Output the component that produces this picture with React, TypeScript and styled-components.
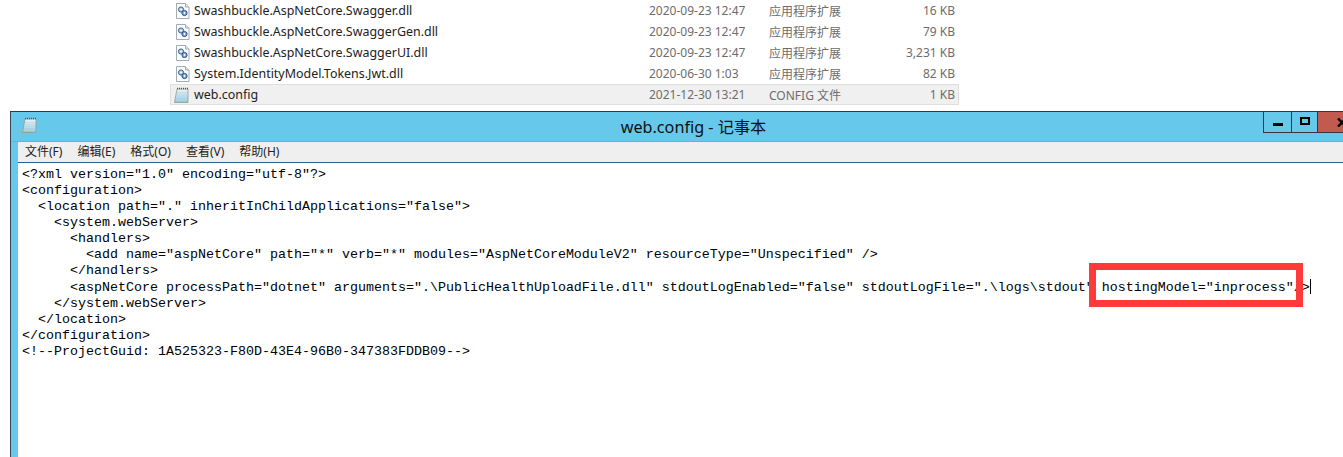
import React from "react";
import styled, { createGlobalStyle } from "styled-components";

const Global = createGlobalStyle`
  html, body { margin: 0; padding: 0; background: #fff; overflow: hidden; }
  #root { width: 1343px; height: 457px; overflow: hidden; }
`;

const Page = styled.div`
  display: flex;
  flex-direction: column;
  width: 1343px;
  height: 457px;
  overflow: hidden;
`;

const FileList = styled.div`
  height: 111px;
  flex: none;
  padding-left: 170px;
  box-sizing: border-box;
`;

const FileRow = styled.div<{ $selected?: boolean }>`
  display: grid;
  grid-template-columns: 24px 455px 120px 132px 54px;
  align-items: center;
  width: 789px;
  height: 21px;
  box-sizing: border-box;
  background: ${(p) => (p.$selected ? "#f0f0f0" : "transparent")};
  outline: ${(p) => (p.$selected ? "1px solid #dedede" : "none")};
  outline-offset: -1px;
  font: 12px "Noto Sans", "Noto Sans CJK SC", sans-serif;
`;

const IconCell = styled.div<{ $inset: number }>`
  display: flex;
  padding-left: ${(p) => p.$inset}px;
`;

const FileName = styled.span`
  color: #222;
  font-size: 12.45px;
  white-space: nowrap;
`;

const FileMeta = styled.span`
  color: #6d6d6d;
  white-space: nowrap;
`;

const FileSize = styled(FileMeta)`
  text-align: right;
`;

const Notepad = styled.section`
  position: relative;
  flex: 1;
  margin-left: 10px;
  width: 1345px;
  box-sizing: border-box;
  display: flex;
  flex-direction: column;
  background: #66c9eb;
  border-top: 1px solid #33373a;
  border-left: 1px solid #33494f;
  padding-left: 7px;
`;

const TitleBar = styled.header`
  height: 30px;
  flex: none;
  position: relative;
  display: flex;
  align-items: center;
  justify-content: center;
  padding: 0 0 1px 21px;
  box-sizing: border-box;
  border-bottom: 1px solid #5fb4d2;
  margin-left: -7px;
  font: 16.2px "Noto Sans", "Noto Sans CJK SC", sans-serif;
  color: #111;
`;

const AppIcon = styled.div`
  position: absolute;
  left: 11px;
  top: 5px;
  display: flex;
`;

const WindowButtons = styled.div`
  position: absolute;
  right: 0;
  top: 0;
  display: flex;
  height: 21px;
  box-sizing: border-box;
  border-bottom: 1px solid #33373a;
  border-left: 1px solid #33373a;
`;

const WinButton = styled.div<{ $close?: boolean; $w: number }>`
  width: ${(p) => p.$w}px;
  display: flex;
  align-items: center;
  justify-content: ${(p) => (p.$close ? "flex-start" : "center")};
  padding-left: ${(p) => (p.$close ? "19px" : "0")};
  box-sizing: border-box;
  background: ${(p) => (p.$close ? "#c15b4f" : "transparent")};
  border-right: ${(p) => (p.$close ? "none" : "1px solid #33373a")};
`;

const MinGlyph = styled.div`
  width: 10px;
  height: 3px;
  background: #000;
  margin-top: 5px;
`;

const MaxGlyph = styled.div`
  width: 10px;
  height: 8px;
  box-sizing: border-box;
  border: 2px solid #000;
  margin-top: -3px;
`;

const MenuBar = styled.nav`
  height: 21px;
  flex: none;
  display: flex;
  align-items: center;
  gap: 15px;
  padding: 0 0 2px 7px;
  background: #efefef;
  border-bottom: 1px solid #2f5f8a;
  box-sizing: border-box;
  font: 12px "Noto Sans", "Noto Sans CJK SC", sans-serif;
  color: #222;
`;

const MenuItem = styled.span`
  white-space: nowrap;
`;

const Editor = styled.pre`
  flex: 1;
  margin: 0;
  padding: 4px 0 0 4px;
  background: #fff;
  font: 13.33px/16px "Liberation Mono", "Noto Sans CJK SC", monospace;
  color: #000;
  white-space: pre;
  overflow: hidden;
`;

const Caret = styled.span`
  display: inline-block;
  width: 1px;
  height: 15px;
  background: #000;
  vertical-align: -3px;
`;

const Highlight = styled.div`
  position: absolute;
  left: 1078px;
  top: 151px;
  width: 214px;
  height: 44px;
  box-sizing: border-box;
  border: 7px solid #ff3a3a;
  pointer-events: none;
`;

const DllIcon = () => (
  <svg width="14" height="16" viewBox="0 0 14 16">
    <path d="M.5.5h9l3.5 3.5v11.5h-12.5z" fill="#fcfdfe" stroke="#a3abb3" />
    <path d="M9.5.5v3.5h3.5" fill="#dfe6ec" stroke="#a3abb3" />
    <circle cx="5" cy="6.5" r="2.6" fill="#a9c6e4" stroke="#41648f" />
    <circle cx="8.5" cy="10" r="2.6" fill="#7fa7d1" stroke="#2f5486" />
    <circle cx="5" cy="6.5" r=".9" fill="#fff" />
    <circle cx="8.5" cy="10" r=".9" fill="#fff" />
  </svg>
);

const NotepadIcon = () => (
  <svg width="15" height="16" viewBox="0 0 15 16">
    <defs>
      <linearGradient id="pad" x1="0" y1="0" x2="0" y2="1">
        <stop offset="0" stopColor="#e9f5f8" />
        <stop offset="1" stopColor="#8fc6dc" />
      </linearGradient>
    </defs>
    <path d="M3 2h11v13.5h-13.5z" fill="url(#pad)" stroke="#9b9a86" strokeWidth=".8" />
    <path d="M3 5.5h10M2.6 8h10.4M2.2 10.5h10.8M1.8 13h11.2" stroke="#bcdce8" strokeWidth=".8" />
    <path d="M3 1.5h11" stroke="#555" strokeWidth="1.6" strokeDasharray="1 1" />
  </svg>
);

const CloseGlyph = () => (
  <svg width="11" height="9" viewBox="0 0 11 9">
    <path d="M1 .5l8 8M9 .5l-8 8" stroke="#000" strokeWidth="2.4" fill="none" />
  </svg>
);

const files = [
  ["Swashbuckle.AspNetCore.Swagger.dll", "2020-09-23 12:47", "应用程序扩展", "16 KB"],
  ["Swashbuckle.AspNetCore.SwaggerGen.dll", "2020-09-23 12:47", "应用程序扩展", "79 KB"],
  ["Swashbuckle.AspNetCore.SwaggerUI.dll", "2020-09-23 12:47", "应用程序扩展", "3,231 KB"],
  ["System.IdentityModel.Tokens.Jwt.dll", "2020-06-30 1:03", "应用程序扩展", "82 KB"],
];

const menus = ["文件(F)", "编辑(E)", "格式(O)", "查看(V)", "帮助(H)"];

const xml = `<?xml version="1.0" encoding="utf-8"?>
<configuration>
  <location path="." inheritInChildApplications="false">
    <system.webServer>
      <handlers>
        <add name="aspNetCore" path="*" verb="*" modules="AspNetCoreModuleV2" resourceType="Unspecified" />
      </handlers>
      <aspNetCore processPath="dotnet" arguments=".\\PublicHealthUploadFile.dll" stdoutLogEnabled="false" stdoutLogFile=".\\logs\\stdout" hostingModel="inprocess"/>`;

const xmlEnd = `
    </system.webServer>
  </location>
</configuration>
<!--ProjectGuid: 1A525323-F80D-43E4-96B0-347383FDDB09-->`;

export default function App() {
  return (
    <Page>
      <Global />
      <FileList>
        {files.map((f) => (
          <FileRow key={f[0]}>
            <IconCell $inset={6}><DllIcon /></IconCell>
            <FileName>{f[0]}</FileName>
            <FileMeta>{f[1]}</FileMeta>
            <FileMeta>{f[2]}</FileMeta>
            <FileSize>{f[3]}</FileSize>
          </FileRow>
        ))}
        <FileRow $selected>
          <IconCell $inset={4}><NotepadIcon /></IconCell>
          <FileName>web.config</FileName>
          <FileMeta>2021-12-30 13:21</FileMeta>
          <FileMeta>CONFIG 文件</FileMeta>
          <FileSize>1 KB</FileSize>
        </FileRow>
      </FileList>
      <Notepad>
        <TitleBar>
          <AppIcon><NotepadIcon /></AppIcon>
          web.config - 记事本
          <WindowButtons>
            <WinButton $w={28}><MinGlyph /></WinButton>
            <WinButton $w={26}><MaxGlyph /></WinButton>
            <WinButton $w={37} $close><CloseGlyph /></WinButton>
          </WindowButtons>
        </TitleBar>
        <MenuBar>
          {menus.map((m) => <MenuItem key={m}>{m}</MenuItem>)}
        </MenuBar>
        <Editor>{xml}<Caret />{xmlEnd}</Editor>
        <Highlight />
      </Notepad>
    </Page>
  );
}
